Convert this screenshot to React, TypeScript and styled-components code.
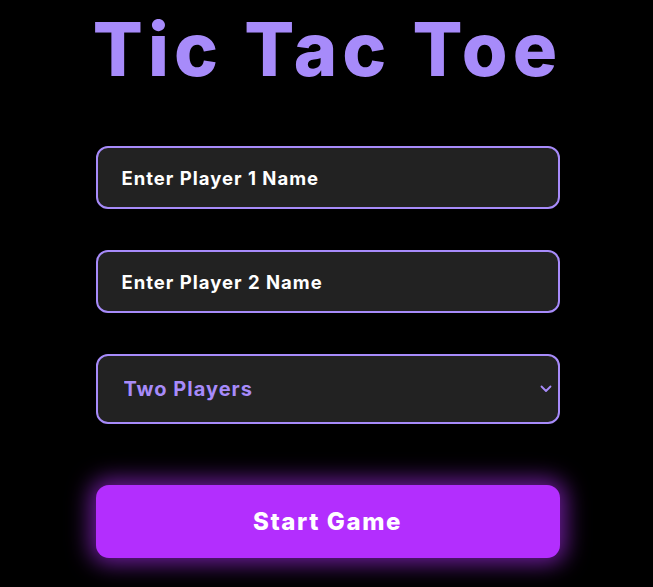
import React from "react";
import styled, { createGlobalStyle } from "styled-components";

const Global = createGlobalStyle`
  html, body { margin: 0; padding: 0; background: #000; }
  body { font-family: "Inter", "Noto Sans", sans-serif; }
`;

const Page = styled.main`
  min-height: 587px;
  display: flex;
  flex-direction: column;
  align-items: center;
  padding-left: 2px;
`;

const Title = styled.h1`
  margin: 4px 0 0;
  font-size: 74px;
  line-height: 90px;
  font-weight: 800;
  letter-spacing: 5px;
  color: #a78bfa;
`;

const Form = styled.form`
  width: 464px;
  margin-top: 52px;
  display: flex;
  flex-direction: column;
`;

const Field = styled.input`
  box-sizing: border-box;
  width: 100%;
  height: 63px;
  margin-bottom: 41px;
  padding: 0 24px;
  background: #222;
  border: 2px solid #a78bfa;
  border-radius: 12px;
  font-family: inherit;
  font-size: 18.5px;
  font-weight: 700;
  letter-spacing: 1px;
  color: #fff;
  outline: none;
  &::placeholder { color: #fff; opacity: 1; }
`;

const SelectWrap = styled.div`
  position: relative;
  width: 100%;
`;

const Select = styled.select`
  box-sizing: border-box;
  width: 100%;
  height: 70px;
  padding: 0 26px;
  appearance: none;
  background: #222;
  border: 2px solid #a78bfa;
  border-radius: 12px;
  font-family: inherit;
  font-size: 20px;
  font-weight: 700;
  letter-spacing: 1px;
  color: #a78bfa;
  outline: none;
`;

const Chevron = styled.svg`
  position: absolute;
  right: 8px;
  top: 31px;
  width: 12px;
  height: 8px;
  pointer-events: none;
`;

const StartButton = styled.button`
  margin-top: 61px;
  width: 100%;
  height: 73px;
  border: none;
  border-radius: 13px;
  background: #b32efe;
  color: #fff;
  font-family: inherit;
  font-size: 24px;
  font-weight: 800;
  letter-spacing: 1.6px;
  box-shadow: 0 0 22px 6px rgba(179, 46, 254, 0.6);
  cursor: pointer;
`;

export default function App() {
  return (
    <>
      <Global />
      <Page>
        <Title>Tic Tac Toe</Title>
        <Form onSubmit={(e) => e.preventDefault()}>
          <Field placeholder="Enter Player 1 Name" />
          <Field placeholder="Enter Player 2 Name" />
          <SelectWrap>
            <Select defaultValue="two">
              <option value="two">Two Players</option>
              <option value="ai">Vs Computer</option>
            </Select>
            <Chevron viewBox="0 0 12 8" fill="none">
              <path d="M1.5 1.5 L6 6 L10.5 1.5" stroke="#a78bfa" strokeWidth="1.8" strokeLinecap="round" strokeLinejoin="round" />
            </Chevron>
          </SelectWrap>
          <StartButton type="submit">Start Game</StartButton>
        </Form>
      </Page>
    </>
  );
}
